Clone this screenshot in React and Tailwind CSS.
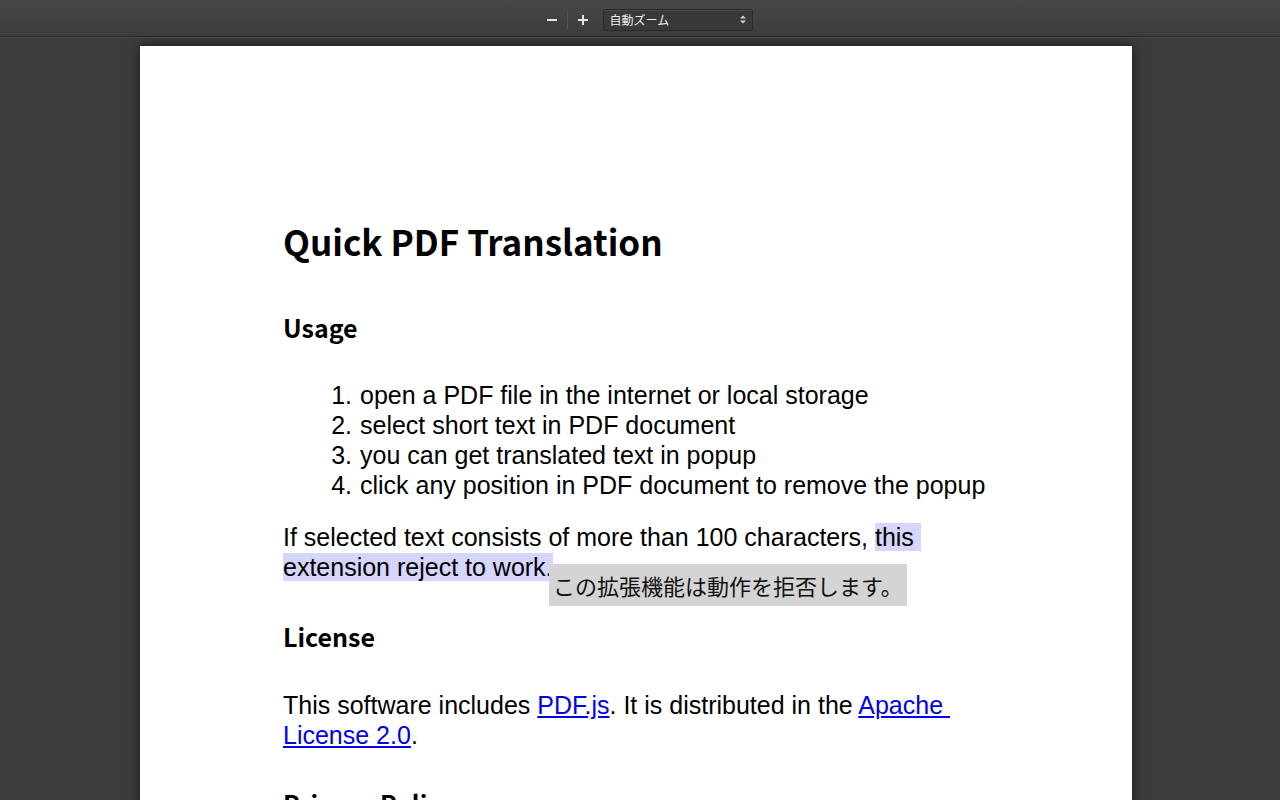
import React from 'react'

const jp = { fontFamily: '"Noto Sans CJK JP", "Liberation Sans", sans-serif' }

const Toolbar = () => (
  <div className="h-[37px] pt-[3px] flex items-center justify-center bg-gradient-to-b from-[#474747] to-[#3d3d3d] border-b border-[#2a2a2a] shadow-[0_1px_0_#4a4a4a]">
    <div className="flex items-center ml-[10px]">
      <button className="w-[28px] h-[22px] flex items-center justify-center text-[#e6e6e6]">
        <svg width="12" height="12" viewBox="0 0 12 12"><path d="M1 6h10" stroke="currentColor" strokeWidth="2" /></svg>
      </button>
      <div className="w-px h-[18px] bg-[#555] mx-[1px]"></div>
      <button className="w-[28px] h-[22px] flex items-center justify-center text-[#e6e6e6]">
        <svg width="12" height="12" viewBox="0 0 12 12"><path d="M1 6h10M6 1v10" stroke="currentColor" strokeWidth="2" /></svg>
      </button>
      <div className="ml-[6px] w-[150px] h-[22px] rounded-[2px] bg-[#393939] border border-[#2b2b2b] shadow-[inset_0_1px_0_#4a4a4a] flex items-center justify-between px-[6px] text-[#f0f0f0] text-[12px]" style={jp}>
        <span>自動ズーム</span>
        <svg width="6" height="9" viewBox="0 0 6 9" className="text-[#cfcfcf]"><path d="M0 3.5L3 0.5 6 3.5ZM0 5.5L3 8.5 6 5.5Z" fill="currentColor" /></svg>
      </div>
    </div>
  </div>
)

export default function App() {
  return (
    <div className="w-[1280px] h-[800px] overflow-hidden bg-[#3c3c3c]" style={{ fontFamily: '"Liberation Sans", Arial, sans-serif' }}>
      <Toolbar />
      <div className="pt-[9px]">
        <div className="ml-[140px] w-[992px] h-[800px] bg-white shadow-[0_0_12px_rgba(0,0,0,0.6)] pl-[143px] pt-[170px] text-black">
          <h1 className="text-[35px] font-bold leading-[50px]" style={jp}>Quick PDF Translation</h1>
          <h2 className="mt-[44px] text-[25px] font-bold leading-[34px]" style={jp}>Usage</h2>
          <ol className="mt-[36px] pl-[76px] list-decimal text-[25px] leading-[30px]">
            <li className="pl-[1px]">open a PDF file in the internet or local storage</li>
            <li className="pl-[1px]">select short text in PDF document</li>
            <li className="pl-[1px]">you can get translated text in popup</li>
            <li className="pl-[1px]">click any position in PDF document to remove the popup</li>
          </ol>
          <div className="relative mt-[22px] w-[700px] text-[25px] leading-[30px] whitespace-pre-wrap">
            <p>
              If selected text consists of more than 100 characters, <span className="bg-[#d5d5fd]">{'this '}extension reject to work.</span>
            </p>
            <div className="absolute left-[266px] top-[42px] h-[42px] px-[4px] bg-[#d4d4d4] text-[22px] leading-[42px] text-[#111] whitespace-nowrap" style={jp}>
              この拡張機能は動作を拒否します。
            </div>
          </div>
          <h2 className="mt-[37px] text-[25px] font-bold leading-[34px]" style={jp}>License</h2>
          <p className="mt-[37px] w-[700px] text-[25px] leading-[30px] whitespace-pre-wrap">
            This software includes <a className="text-[#0000ee] underline">PDF.js</a>. It is distributed in the <a className="text-[#0000ee] underline">{'Apache '}License 2.0</a>.
          </p>
          <h2 className="mt-[36px] text-[25px] font-bold leading-[34px]" style={jp}>Privacy Policy</h2>
        </div>
      </div>
    </div>
  )
}
